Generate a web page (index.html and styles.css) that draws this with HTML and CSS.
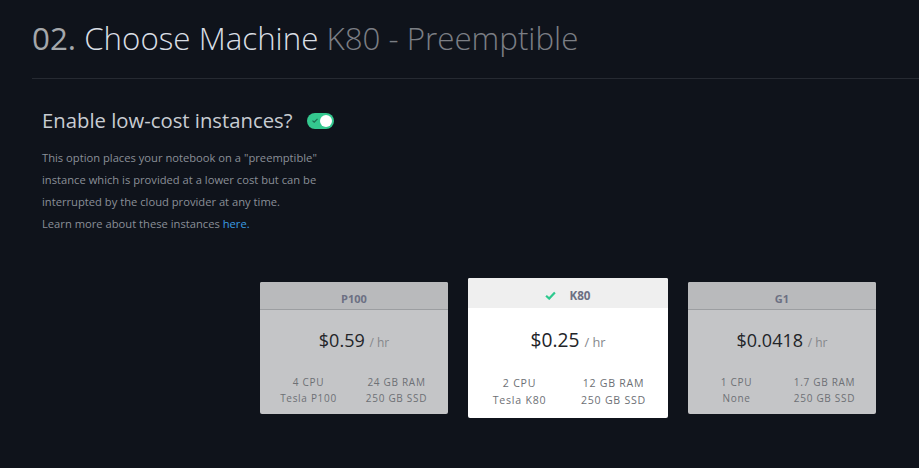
FILE: index.html
```html
<!DOCTYPE html>
<html>
<head>
<meta charset="utf-8">
<link rel="stylesheet" href="styles.css">
</head>
<body>
<header class="header">
  <h1 class="title"><span class="num">02.</span> <span class="main">Choose Machine</span> <span class="sub">K80 - Preemptible</span></h1>
</header>
<section class="section">
  <h2 class="subtitle">Enable low-cost instances? <span class="toggle"><svg class="tick" width="6" height="5" viewBox="0 0 6 5"><path d="M0.5 2.6 L2.2 4.2 L5.5 0.8" fill="none" stroke="#1e6e52" stroke-width="1.2"/></svg><span class="knob"></span></span></h2>
  <p class="desc">This option places your notebook on a "preemptible"<br>instance which is provided at a lower cost but can be<br>interrupted by the cloud provider at any time.<br>Learn more about these instances <a class="link" href="#">here.</a></p>
  <div class="cards">
    <div class="card">
      <div class="card-head">P100</div>
      <div class="card-body">
        <div class="price">$0.59 <span class="unit">/ hr</span></div>
        <div class="specs"><span>4 CPU</span><span>24 GB RAM</span><span>Tesla P100</span><span>250 GB SSD</span></div>
      </div>
    </div>
    <div class="card selected">
      <div class="card-head"><svg class="check" width="11" height="9" viewBox="0 0 10 8"><path d="M1 4.2 L3.8 6.8 L9 1.2" fill="none" stroke="#2dc98e" stroke-width="2"/></svg>K80</div>
      <div class="card-body">
        <div class="price">$0.25 <span class="unit">/ hr</span></div>
        <div class="specs"><span>2 CPU</span><span>12 GB RAM</span><span>Tesla K80</span><span>250 GB SSD</span></div>
      </div>
    </div>
    <div class="card">
      <div class="card-head">G1</div>
      <div class="card-body">
        <div class="price">$0.0418 <span class="unit">/ hr</span></div>
        <div class="specs"><span>1 CPU</span><span>1.7 GB RAM</span><span>None</span><span>250 GB SSD</span></div>
      </div>
    </div>
  </div>
</section>
</body>
</html>
```
FILE: styles.css
```css
html, body {
  margin: 0;
  padding: 0;
  background: #0f131b;
  font-family: "Open Sans", "DejaVu Sans", sans-serif;
}
.header {
  margin-left: 32px;
  border-bottom: 1px solid #262a32;
  padding: 18px 0 20px;
}
.title {
  margin: 0;
  font-size: 31.3px;
  line-height: 40px;
  font-weight: 300;
  white-space: nowrap;
}
.num { color: #a4a7ab; font-weight: 400; }
.main { color: #d9dee4; }
.sub { color: #7b7e84; }
.section {
  padding-left: 42px;
}
.subtitle {
  margin: 27px 0 0;
  font-size: 20.3px;
  line-height: 28px;
  font-weight: 400;
  color: #c8ccd2;
  display: flex;
  align-items: center;
  gap: 14px;
}
.toggle {
  width: 27px;
  height: 16px;
  border-radius: 8px;
  background: #34c88f;
  display: flex;
  align-items: center;
  justify-content: space-between;
  padding: 0 2px 0 5px;
  box-sizing: border-box;
  margin-top: 1px;
}
.knob {
  width: 12px;
  height: 12px;
  border-radius: 50%;
  background: #fff;
}
.desc {
  margin: 13px 0 0;
  font-size: 11.2px;
  line-height: 22px;
  color: #8a8f98;
}
.link {
  color: #3b9ce2;
  text-decoration: none;
}
.cards {
  display: flex;
  align-items: center;
  gap: 20px;
  margin-top: 43px;
  padding-left: 218px;
}
.card {
  width: 188px;
  height: 132px;
  flex: none;
  background: #c4c5c7;
  border-radius: 2px;
  overflow: hidden;
  display: flex;
  flex-direction: column;
}
.card-head {
  height: 28px;
  flex: none;
  border-bottom: 1px solid #9c9ea1;
  background: #b9babc;
  display: flex;
  align-items: center;
  justify-content: center;
  padding-top: 6px;
  box-sizing: border-box;
  font-size: 11px;
  font-weight: 700;
  color: #6c7083;
  gap: 12px;
}
.card-body {
  flex: 1;
  display: flex;
  flex-direction: column;
  align-items: center;
}
.price {
  margin-top: 18px;
  font-size: 18px;
  line-height: 24px;
  color: #222428;
}
.unit {
  font-size: 12px;
  color: #85878b;
}
.specs {
  margin-top: 19px;
  display: grid;
  grid-template-columns: 88px 88px;
  font-size: 10px;
  line-height: 16px;
  letter-spacing: 0.7px;
  color: #6d7075;
  text-align: center;
  padding-right: 3px;
}
.card.selected {
  width: 200px;
  height: 140px;
  background: #ffffff;
}
.selected .card-head {
  height: 30px;
  padding-top: 5px;
  background: #efefef;
  border-bottom-color: #efefef;
  font-size: 11.7px;
  gap: 13px;
}
.selected .price {
  margin-top: 19px;
  font-size: 19.2px;
  line-height: 25px;
}
.selected .unit {
  font-size: 12.8px;
}
.selected .specs {
  margin-top: 20px;
  grid-template-columns: 94px 94px;
  font-size: 10.6px;
  line-height: 17px;
  letter-spacing: 0.75px;
}
```
